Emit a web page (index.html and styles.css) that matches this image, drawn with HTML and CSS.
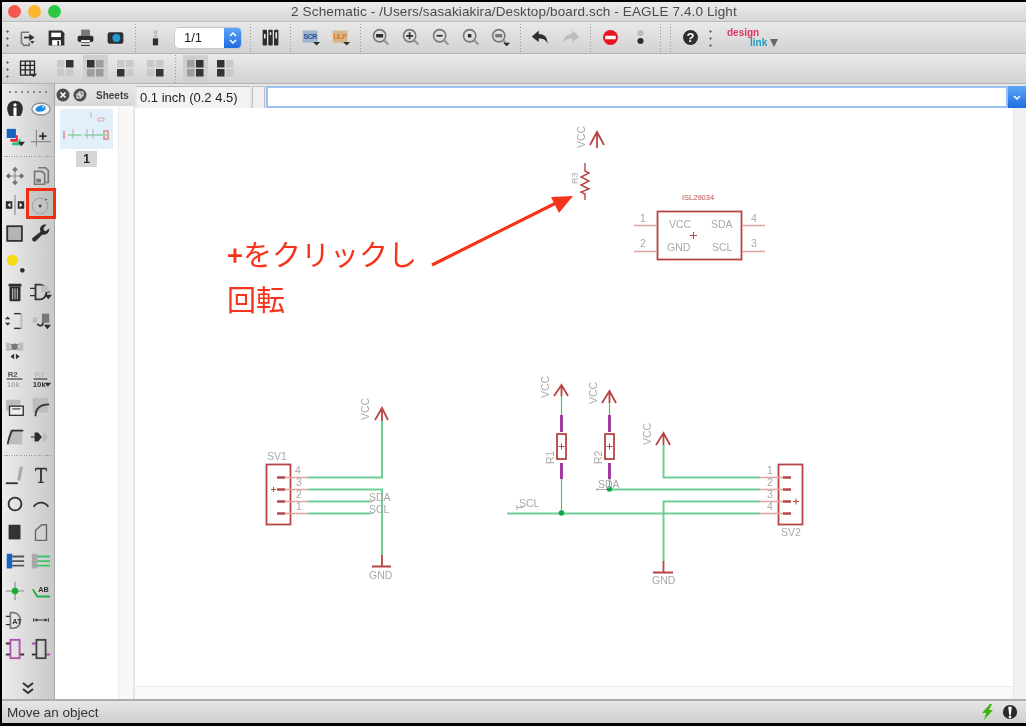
FILE: index.html
```html
<!DOCTYPE html>
<html lang="en">
<head>
<meta charset="utf-8">
<title>2 Schematic - EAGLE</title>
<link rel="stylesheet" href="styles.css">
</head>
<body>
<div class="window">
  <header class="titlebar">
    <div class="traffic"><span class="light red"></span><span class="light amber"></span><span class="light green"></span></div>
    <h1 class="title">2 Schematic - /Users/sasakiakira/Desktop/board.sch - EAGLE 7.4.0 Light</h1>
    <div></div>
  </header>

  <div class="toolbar tb1">
    <span class="grip"></span>
    <span class="btn"><svg viewBox="0 0 24 24"><path class="o2g" d="M5 6h9M5 6v12l3 3h6v-3"/><path class="o2d" d="M8 12h8"/><path class="fd" d="M14 8l6 4-6 4z"/><path class="fd" d="M15 16h5l-2.500 3z"/></svg></span>
    <span class="btn narrow"><svg viewBox="0 0 24 24"><path class="fd" d="M3 4h15l3 3v14H3z"/><rect class="fw" x="6" y="6.500" width="11" height="5"/><rect class="fw" x="7" y="15" width="10" height="6"/><rect class="fd" x="13" y="16" width="2" height="5"/></svg></span>
    <span class="btn"><svg viewBox="0 0 24 24"><rect class="fm" x="7" y="3" width="10" height="7"/><rect class="fd" x="3" y="10" width="18" height="7" rx="2"/><rect class="fw" x="7" y="15" width="10" height="6"/><path class="o1d" d="M7 21h10M7 18h10"/></svg></span>
    <span class="btn"><svg viewBox="0 0 24 24"><rect class="fd" x="3" y="6" width="18" height="13" rx="2.500"/><circle cx="13" cy="12.500" r="4.500" fill="#1d9bd8"/></svg></span>
    <span class="sep"></span>
    <span class="btn"><svg viewBox="0 0 24 24"><rect class="fd" x="9" y="13" width="6" height="8"/><rect class="fl" x="10" y="9" width="4" height="3"/><rect class="fl" x="10" y="4" width="4" height="4"/></svg></span>
    <label class="combo"><span class="combo-val">1/1</span><span class="combo-btn"><svg viewBox="0 0 14 20"><path class="chev" d="M4 8l3-3 3 3M4 12l3 3 3-3"/></svg></span></label>
    <span class="sep"></span>
    <span class="btn"><svg viewBox="0 0 24 24"><rect class="fd" x="3" y="3" width="5" height="18" rx="1"/><rect class="fd" x="9.500" y="3" width="5" height="18" rx="1"/><rect class="fd" x="16" y="3" width="5" height="18" rx="1"/><path class="ow" d="M5.500 8v5M12 6v3M18.500 6v7"/></svg></span>
    <span class="sep"></span>
    <span class="btn"><svg viewBox="0 0 24 24"><rect x="3" y="4" width="17" height="14" fill="#9fb6d0"/><text class="ico-t" x="4" y="14" fill="#2a4f9a">SCR</text><path class="fd" d="M15 17h8l-4 4z"/></svg></span>
    <span class="btn"><svg viewBox="0 0 24 24"><rect x="3" y="4" width="17" height="14" fill="#d6b68d"/><text class="ico-t" x="4" y="14" fill="#e4761c">ULP</text><path class="fd" d="M15 17h8l-4 4z"/></svg></span>
    <span class="sep"></span>
    <span class="btn"><svg viewBox="0 0 24 24"><circle class="zo" cx="11" cy="10" r="7"/><path class="zh" d="M16 15l5 5"/><rect class="fd" x="7" y="8" width="8" height="4"/></svg></span>
    <span class="btn"><svg viewBox="0 0 24 24"><circle class="zo" cx="11" cy="10" r="7"/><path class="zh" d="M16 15l5 5"/><path class="o2d" d="M7 10h8M11 6v8"/></svg></span>
    <span class="btn"><svg viewBox="0 0 24 24"><circle class="zo" cx="11" cy="10" r="7"/><path class="zh" d="M16 15l5 5"/><path class="o2d" d="M7.500 10h7"/></svg></span>
    <span class="btn"><svg viewBox="0 0 24 24"><circle class="zo" cx="11" cy="10" r="7"/><path class="zh" d="M16 15l5 5"/><rect class="fd" x="9" y="8" width="4" height="4"/></svg></span>
    <span class="btn"><svg viewBox="0 0 24 24"><circle class="zo" cx="10" cy="10" r="7"/><path class="zh" d="M15 15l3 3"/><rect class="fm" x="6" y="8" width="8" height="4"/><path class="fd" d="M15 18h8l-4 4z"/></svg></span>
    <span class="sep"></span>
    <span class="btn"><svg viewBox="0 0 24 24"><path class="fd" d="M10 4L2 11l8 6v-4c5 0 8 1 10 6 0-7-3-11-10-11z"/></svg></span>
    <span class="btn"><svg viewBox="0 0 24 24"><path class="fl" d="M14 4l8 7-8 6v-4c-5 0-8 1-10 6 0-7 3-11 10-11z"/></svg></span>
    <span class="sep"></span>
    <span class="btn"><svg viewBox="0 0 24 24"><circle cx="12" cy="12" r="8.500" fill="#e8141f"/><rect class="fw" x="6" y="10" width="12" height="4"/></svg></span>
    <span class="btn"><svg viewBox="0 0 24 24"><circle class="fl" cx="12" cy="7" r="3.500"/><circle class="fd" cx="12" cy="16" r="3.500"/></svg></span>
    <span class="sep"></span>
    <span class="sep"></span>
    <span class="btn"><svg viewBox="0 0 24 24"><circle class="fd" cx="12" cy="12" r="8.500"/><text class="ico-q" x="12" y="17">?</text></svg></span>
    <span class="grip"></span>
    <span class="dlink"><span class="dl-a">design</span><span class="dl-b">link</span></span>
    <span class="dl-arrow"></span>
  </div>

  <div class="toolbar tb2">
    <span class="grip"></span>
    <span class="btn"><svg viewBox="0 0 24 24"><path class="o1k" d="M4 3.500h16v16H4zM4 8.500h16M4 13.500h16M9.500 3.500v16M15 3.500v16"/><path class="fd" d="M15 18h8l-4 4z"/></svg></span>
    <span class="sep small"></span>
    <span class="btn"><svg class="quad" viewBox="0 0 25 27"><rect class="ql" x="4" y="5" width="7.500" height="7.500"/><rect class="qd" x="13" y="5" width="7.500" height="7.500"/><rect class="ql" x="4" y="14" width="7.500" height="7.500"/><rect class="ql" x="13" y="14" width="7.500" height="7.500"/></svg></span>
    <span class="btn"><svg class="quad on" viewBox="0 0 25 27"><rect class="qd" x="4" y="5" width="7.500" height="7.500"/><rect class="ql2" x="13" y="5" width="7.500" height="7.500"/><rect class="ql2" x="4" y="14" width="7.500" height="7.500"/><rect class="ql2" x="13" y="14" width="7.500" height="7.500"/></svg></span>
    <span class="btn"><svg class="quad" viewBox="0 0 25 27"><rect class="ql" x="4" y="5" width="7.500" height="7.500"/><rect class="ql" x="13" y="5" width="7.500" height="7.500"/><rect class="qd" x="4" y="14" width="7.500" height="7.500"/><rect class="ql" x="13" y="14" width="7.500" height="7.500"/></svg></span>
    <span class="btn"><svg class="quad" viewBox="0 0 25 27"><rect class="ql" x="4" y="5" width="7.500" height="7.500"/><rect class="ql" x="13" y="5" width="7.500" height="7.500"/><rect class="ql" x="4" y="14" width="7.500" height="7.500"/><rect class="qd" x="13" y="14" width="7.500" height="7.500"/></svg></span>
    <span class="sep"></span>
    <span class="btn"><svg class="quad on" viewBox="0 0 25 27"><rect class="ql2" x="4" y="5" width="7.500" height="7.500"/><rect class="qd" x="13" y="5" width="7.500" height="7.500"/><rect class="ql2" x="4" y="14" width="7.500" height="7.500"/><rect class="qd" x="13" y="14" width="7.500" height="7.500"/></svg></span>
    <span class="btn"><svg class="quad" viewBox="0 0 25 27"><rect class="qd" x="4" y="5" width="7.500" height="7.500"/><rect class="ql" x="13" y="5" width="7.500" height="7.500"/><rect class="qd" x="4" y="14" width="7.500" height="7.500"/><rect class="ql" x="13" y="14" width="7.500" height="7.500"/></svg></span>
  </div>

  <main class="workspace">
    <nav class="tools">
      <div class="tools-grip"></div>
      <div class="tool-grid">
        <span class="tool"><svg viewBox="0 0 24 24"><path class="fd" d="M12 3c5 0 8.500 3.500 8.500 8.500 0 3-1 5.500-2.500 8H6c-1.500-2.500-2.500-5-2.500-8C3.500 6.500 7 3 12 3z"/><circle class="fw" cx="12" cy="7.500" r="1.800"/><rect class="fw" x="10.300" y="10.500" width="3.400" height="9"/></svg></span>
        <span class="tool"><svg viewBox="0 0 24 24"><ellipse cx="12" cy="12" rx="10" ry="6.500" fill="#f6f6f6" stroke="#8f8f8f" stroke-width="1.500"/><path d="M6 13c0-3 4-5 8-5 2 0 3 1 3 3 0 3-4 4-6 4-3 0-5-1-5-2z" fill="#1d8bdc"/><circle class="fw" cx="14.500" cy="9.500" r="1"/></svg></span>
        <span class="tool"><svg viewBox="0 0 24 24"><rect x="3" y="2" width="10" height="10" fill="#1565c0"/><path d="M13 9h2v7H7v-3h6z" fill="#e8213f"/><path d="M16 13h2v7H9v-3h7z" fill="#24c26a"/><path class="fd" d="M15 16h8l-4 5z"/></svg></span>
        <span class="tool"><svg viewBox="0 0 24 24"><path class="o1m" d="M7 3v18M1 16h22"/><path class="o2d" d="M14 6v8M10 10h8"/></svg></span>
        <span class="sep-h"></span>
        <span class="tool"><svg viewBox="0 0 24 24"><path class="o1m" d="M12 8v8M8 12h8"/><path class="fm" d="M12 2l3 3-3 3-3-3zM12 16l3 3-3 3-3-3zM2 12l3-3 3 3-3 3zM16 12l3-3 3 3-3 3z"/></svg></span>
        <span class="tool"><svg viewBox="0 0 24 24"><path class="o2g" d="M9 3h8l3 3v13h-3"/><path class="o2g" d="M5 7h8l3 3v11H5z"/><rect class="fm" x="7" y="15" width="5" height="4"/></svg></span>
        <span class="tool"><svg viewBox="0 0 24 24"><path class="o1m" d="M12 1v22"/><path class="fd" d="M2 8h7v8H2zM15 8h7v8h-7z"/><path class="fw" d="M4 12l3-2.500v5zM20 12l-3-2.500v5z"/></svg></span>
        <span class="tool"><svg viewBox="0 0 24 24"><circle cx="11" cy="13" r="8.500" fill="none" stroke="#9a9a9a" stroke-width="1"/><circle class="fd" cx="11" cy="13" r="1.600"/><path class="o1d" d="M17 5.500l1.500 1"/></svg></span>
        <span class="tool"><svg viewBox="0 0 24 24"><rect x="3.500" y="3.500" width="16" height="16" fill="#b5b5b5" stroke="#333" stroke-width="2"/></svg></span>
        <span class="tool"><svg viewBox="0 0 24 24"><path class="fd" d="M21 6l-4 3-2-1 0-3 3-3c-3-1-7 1-7 5 0 1 0 1.500.5 2.500L3 16c-2 2 1 6 3.500 3.500l7-7c4 1 8-2 7.500-6.500z"/></svg></span>
        <span class="tool"><svg viewBox="0 0 24 24"><circle cx="9" cy="9" r="6" fill="#f5dc12"/><circle class="fd" cx="20" cy="20" r="2.500"/></svg></span>
        <span class="tool"></span>
        <span class="tool"><svg viewBox="0 0 24 24"><rect class="fd" x="5" y="3" width="14" height="3"/><rect class="fd" x="6" y="6" width="12" height="16" rx="1"/><path class="ow1" d="M9.500 8v12M12 8v12M14.500 8v12"/></svg></span>
        <span class="tool"><svg viewBox="0 0 24 24"><path class="o1d" d="M0 8h6M0 16h6M17 12h5"/><path class="o2d" d="M6 4v16h5c4 0 7-4 7-8s-3-8-7-8z"/><rect class="fl" x="12" y="5" width="8" height="7"/><path class="fd" d="M16 15h8l-4 5z"/></svg></span>
        <span class="tool"><svg viewBox="0 0 24 24"><path class="fd" d="M1 10l3-3 3 3zM1 14l3 3 3-3z"/><path class="o2l" d="M11 4h8v16h-8"/><path class="o1d" d="M11 4h7M11 20h7"/></svg></span>
        <span class="tool"><svg viewBox="0 0 24 24"><rect class="fl" x="3" y="8" width="5" height="6"/><rect class="fm" x="13" y="4" width="8" height="10"/><path class="o2d" d="M8 15c2 3 6 3 6-1"/><path class="fd" d="M15 16h8l-4 5z"/></svg></span>
        <span class="tool"><svg viewBox="0 0 24 24"><rect class="fl" x="2" y="4" width="5" height="9"/><rect class="fl" x="16" y="4" width="5" height="9"/><path class="o1m" d="M7 6h2M14 6h2M7 11h2M14 11h2"/><circle class="fm" cx="11.500" cy="8.500" r="3.500"/><path class="fd" d="M11 16v6l-4-3zM13 16v6l4-3z"/></svg></span>
        <span class="tool"></span>
        <span class="tool"><svg viewBox="0 0 24 24"><text class="ico-r" x="4" y="10" fill="#555">R2</text><path class="o1d" d="M3 12h17"/><text class="ico-r" x="3" y="21" fill="#aaa">10k</text></svg></span>
        <span class="tool"><svg viewBox="0 0 24 24"><text class="ico-r" x="5" y="10" fill="#bbb">R2</text><path class="o1d" d="M4 12h15"/><text class="ico-r" x="3" y="21" fill="#333">10k</text><path class="fd" d="M16 16h7l-3.500 4.500z"/></svg></span>
        <span class="tool"><svg viewBox="0 0 24 24"><rect class="fl" x="2" y="3" width="16" height="12"/><rect x="6" y="10" width="15" height="10" fill="#eee" stroke="#333" stroke-width="1.500"/><path class="o1d" d="M9 13h9"/></svg></span>
        <span class="tool"><svg viewBox="0 0 24 24"><rect class="fl" x="3" y="1" width="17" height="16"/><path class="o2d" d="M6 21c0-9 5-13 15-13"/></svg></span>
        <span class="tool"><svg viewBox="0 0 24 24"><rect class="fl" x="6" y="4" width="14" height="16"/><path class="o2d" d="M4 20c1-5 3-12 5-15h12"/></svg></span>
        <span class="tool"><svg viewBox="0 0 24 24"><path class="o1d" d="M1 12h4"/><path class="fd" d="M5 7h4l4 5-4 5H5z"/><path class="fl" d="M14 7h2l4 5-4 5h-2z"/></svg></span>
        <span class="sep-h"></span>
        <span class="tool"><svg viewBox="0 0 24 24"><path class="o2d" d="M2 21h13"/><path d="M16 18l3-15" stroke="#aaa" stroke-width="3.500" fill="none"/></svg></span>
        <span class="tool"><svg viewBox="0 0 24 24"><path class="o2d" d="M6 5h12M12 5v15"/><path class="o1d" d="M9 20h6M6 5v3M18 5v3"/></svg></span>
        <span class="tool"><svg viewBox="0 0 24 24"><circle cx="12" cy="12" r="7" fill="none" stroke="#333" stroke-width="2"/></svg></span>
        <span class="tool"><svg viewBox="0 0 24 24"><path class="o2d" d="M4 15c4-6 12-6 16 0"/></svg></span>
        <span class="tool"><svg viewBox="0 0 24 24"><rect x="5" y="3" width="13" height="16" fill="#333"/></svg></span>
        <span class="tool"><svg viewBox="0 0 24 24"><path d="M6 20V9l7-6h5v17z" fill="none" stroke="#666" stroke-width="1.500"/></svg></span>
        <span class="tool"><svg viewBox="0 0 24 24"><rect x="3" y="3" width="6" height="16" fill="#1565c0"/><path class="o2m" d="M9 6h13M9 11h13M9 16h13"/></svg></span>
        <span class="tool"><svg viewBox="0 0 24 24"><rect x="2" y="3" width="6" height="16" fill="#a9a9a9"/><path d="M8 6h14M8 11h14M8 16h14" stroke="#3cc46a" stroke-width="2" fill="none"/></svg></span>
        <span class="tool"><svg viewBox="0 0 24 24"><path class="o1m" d="M2 12h20M12 2v20"/><circle cx="12" cy="12" r="3.500" fill="#0fb02c"/></svg></span>
        <span class="tool"><svg viewBox="0 0 24 24"><path d="M3 10l5 8h14" stroke="#22b14c" stroke-width="2" fill="none"/><text class="ico-ab" x="9" y="13">AB</text></svg></span>
        <span class="tool"><svg viewBox="0 0 24 24"><path class="o1d" d="M2 8h5M2 17h5"/><path class="o2g" d="M7 4v17h3c5 0 8-4 8-8.500S15 4 10 4z"/><text class="ico-ab" x="9" y="16">AT</text></svg></span>
        <span class="tool"><svg viewBox="0 0 24 24"><path class="o1d" d="M4 10v4M20 10v4M6 12h12"/><path class="fd" d="M5 12l3-2v4zM19 12l-3-2v4z"/></svg></span>
        <span class="tool"><svg viewBox="0 0 24 24"><path class="o2d" d="M2 6h5M17 18h5"/><path class="o2d" d="M2 18h5"/><rect x="7" y="2" width="10" height="20" fill="none" stroke="#b04fb0" stroke-width="2"/></svg></span>
        <span class="tool"><svg viewBox="0 0 24 24"><path class="o2d" d="M2 18h5"/><path d="M2 6h5M17 18h5" stroke="#b04fb0" stroke-width="2" fill="none"/><rect x="7" y="2" width="10" height="20" fill="none" stroke="#444" stroke-width="2"/></svg></span>
      </div>
      <span class="more"><svg viewBox="0 0 14 14"><path d="M2 1l5 4 5-4M2 7l5 4 5-4" fill="none" stroke="#333" stroke-width="2"/></svg></span>
      <span class="tool-mark"></span>
    </nav>

    <aside class="sheets">
      <div class="sheets-head">
        <span class="round"><svg viewBox="0 0 14 14"><circle class="fd2" cx="7" cy="7" r="6.500"/><path class="ow" d="M4.500 4.500l5 5M9.500 4.500l-5 5"/></svg></span>
        <span class="round"><svg viewBox="0 0 14 14"><circle class="fd2" cx="7" cy="7" r="6.500"/><rect x="6" y="4" width="4" height="4" fill="none" stroke="#fff"/><rect x="4" y="6" width="4" height="4" fill="none" stroke="#fff"/></svg></span>
        <span class="sheets-title">Sheets</span>
      </div>
      <div class="sheets-body">
        <div class="sheet-list">
          <div class="thumb"><svg viewBox="0 0 53 40"><g class="thumb-lines"><path d="M31 3v6M38 9h6v3h-6z"/></g><path class="thumb-r" d="M4 22v8M44 22h4v8h-4z"/><path class="thumb-g" d="M8 26h14M24 26h24"/><path class="thumb-l" d="M13 20v10M27 20v10M33 20v10"/></svg></div>
          <span class="sheet-no">1</span>
        </div>
        <div class="sheet-scroll"></div>
      </div>
    </aside>

    <section class="editor">
      <div class="cmdbar">
        <span class="coord">0.1 inch (0.2 4.5)</span>
        <span class="cmd-box"></span>
        <div class="cmd-input"></div>
        <span class="cmd-drop"><svg viewBox="0 0 12 12"><path class="chev" d="M3 5l3 3 3-3"/></svg></span>
      </div>
      <div class="canvas-row">
        <div class="canvas-col">
          <div class="canvas">
            <svg class="schematic" viewBox="135 108 878 577">
              <!-- top VCC + R3 -->
              <path class="sym" d="M597 148V132M590 145L597 132L604 145"/>
              <text class="lbl" transform="translate(585 148) rotate(-90)">VCC</text>
              <path class="sym thinner" d="M585 163V171L589 173L581 177L589 181L581 185L589 189L581 192L585 194V200"/>
              <text class="lbl small" transform="translate(578 184) rotate(-90)">R3</text>
              <!-- IC -->
              <text class="lbl red tiny" x="682" y="200">ISL29034</text>
              <rect class="sym" x="657.500" y="211.500" width="84" height="48"/>
              <path class="pin" d="M634 225.500H657M634 251.500H657M742 225.500H765M742 251.500H765"/>
              <text class="lbl" x="669" y="228">VCC</text>
              <text class="lbl" x="667" y="251">GND</text>
              <text class="lbl" x="711" y="228">SDA</text>
              <text class="lbl" x="712" y="251">SCL</text>
              <text class="lbl" x="640" y="222">1</text>
              <text class="lbl" x="640" y="247">2</text>
              <text class="lbl" x="751" y="222">4</text>
              <text class="lbl" x="751" y="247">3</text>
              <path class="sym thin" d="M690 235.500H697M693.500 232V239"/>

              <!-- SV1 -->
              <rect class="sym" x="266.500" y="464.500" width="24" height="60"/>
              <path class="pin" d="M285 477.500H308M285 489.500H308M285 501.500H308M285 513.500H308"/>
              <path class="dash" d="M277 477.500H285M277 489.500H285M277 501.500H285M277 513.500H285"/>
              <path class="sym thin" d="M271 489.500H276M273.500 487V492"/>
              <path class="wire" d="M308 477.500H382V421M308 489.500H382V555M308 501.500H370M308 513.500H370"/>
              <path class="pinmark" d="M370 501.500H373M370 513.500H373"/>
              <path class="sym" d="M382 421V408M375 420L382 408L388 420"/>
              <path class="sym" d="M382 555V566M372 566.500H391"/>
              <text class="lbl" transform="translate(369 420) rotate(-90)">VCC</text>
              <text class="lbl" x="267" y="460">SV1</text>
              <text class="lbl" x="295" y="474">4</text>
              <text class="lbl" x="296" y="486">3</text>
              <text class="lbl" x="296" y="498">2</text>
              <text class="lbl" x="296" y="510">1</text>
              <text class="lbl" x="369" y="501">SDA</text>
              <text class="lbl" x="369" y="513">SCL</text>
              <text class="lbl" x="369" y="579">GND</text>

              <!-- R1, R2 -->
              <path class="sym" d="M561.500 396V385M554 396L561.500 385L568 396"/>
              <path class="wire thin" d="M561.500 396V415M561.500 479V513"/>
              <path class="res" d="M561.500 415V432M561.500 463V479"/>
              <rect class="sym" x="557" y="434" width="9" height="25"/>
              <path class="sym thin" d="M558.500 446.500H564.500M561.500 443.500V449.500"/>
              <text class="lbl" transform="translate(554 464) rotate(-90)">R1</text>
              <text class="lbl" transform="translate(549 398) rotate(-90)">VCC</text>
              <path class="sym" d="M609.500 403V391M602 403L609.500 391L616 403"/>
              <path class="wire thin" d="M609.500 403V415M609.500 479V489"/>
              <path class="res" d="M609.500 415V432M609.500 463V479"/>
              <rect class="sym" x="605" y="434" width="9" height="25"/>
              <path class="sym thin" d="M606.500 446.500H612.500M609.500 443.500V449.500"/>
              <text class="lbl" transform="translate(602 464) rotate(-90)">R2</text>
              <text class="lbl" transform="translate(597 404) rotate(-90)">VCC</text>

              <!-- SV2 side -->
              <path class="wire" d="M507 513.500H760M609 489.500H760M663.500 445V477.500H760M760 501.500H663.500V561"/>
              <path class="pinmark" d="M597 489.500H609M597 488V491"/>
              <path class="pinmark" d="M517 507.500H523M517 505V510"/>
              <circle class="dot" cx="561.500" cy="513" r="2.800"/>
              <circle class="dot" cx="609.500" cy="489" r="2.800"/>
              <path class="sym" d="M663.500 445V433M656 445L663.500 433L670 445"/>
              <path class="sym" d="M663.500 561V572M653 572.500H673"/>
              <text class="lbl" transform="translate(651 445) rotate(-90)">VCC</text>
              <text class="lbl" x="598" y="488">SDA</text>
              <text class="lbl" x="519" y="507">SCL</text>
              <text class="lbl" x="652" y="584">GND</text>
              <rect class="sym" x="778.500" y="464.500" width="24" height="60"/>
              <path class="pin" d="M760 477.500H783M760 489.500H783M760 501.500H783M760 513.500H783"/>
              <path class="dash" d="M783 477.500H791M783 489.500H791M783 501.500H791M783 513.500H791"/>
              <path class="sym thin" d="M793 501.500H799M796 498.500V504.500"/>
              <text class="lbl" x="767" y="474">1</text>
              <text class="lbl" x="767" y="486">2</text>
              <text class="lbl" x="767" y="498">3</text>
              <text class="lbl" x="767" y="510">4</text>
              <text class="lbl" x="781" y="536">SV2</text>

              <!-- annotation -->
              <text class="note" x="227" y="266"><tspan class="note-plus">+</tspan>をクリックし</text>
              <text class="note" x="227" y="311">回転</text>
              <path class="arrow" d="M432 265L556 203"/>
              <path class="arrow-head" d="M573 196L551 197L559 213z"/>
            </svg>
          </div>
          <div class="hscroll"></div>
        </div>
        <div class="vscroll"></div>
      </div>
    </section>
  </main>

  <footer class="statusbar">
    <span class="status-text">Move an object</span>
    <span class="status-icons">
      <svg viewBox="0 0 16 18"><path d="M10 1L2 10h4l-2 7 9-10H9l3-6z" fill="#3eb512"/></svg>
      <svg viewBox="0 0 18 18"><circle cx="9" cy="9" r="8" fill="#2a2a2a"/><path d="M7 3h4l-1 9H8z" fill="#fff"/><circle cx="9" cy="14.500" r="1.500" fill="#fff"/></svg>
    </span>
  </footer>
</div>
</body>
</html>
```

FILE: styles.css
```css
* { box-sizing: border-box; }
html, body { margin: 0; height: 100%; }
body { background: #000; padding: 2px 0 3px 2px; overflow: hidden; font-family: "Inter", "Liberation Sans", sans-serif; }
.window { height: 721px; display: flex; flex-direction: column; background: #e0e0e0; filter: blur(0.45px); }

.titlebar { height: 20px; display: grid; grid-template-columns: 1fr auto 1fr; align-items: center; background: linear-gradient(#ececec, #d6d6d6); border-bottom: 1px solid #bdbdbd; }
.traffic { display: flex; gap: 7px; padding-left: 5.500px; }
.light { width: 13px; height: 13px; border-radius: 50%; }
.red { background: #f5584f; }
.amber { background: #f9b62e; }
.green { background: #2cc840; }
.title { margin: 0; font: 400 13.500px "Liberation Sans", sans-serif; color: #4a4a4a; letter-spacing: 0.13px; }

.toolbar { display: flex; align-items: center; background: linear-gradient(#e9e9e9, #d2d2d2); border-bottom: 1px solid #b4b4b4; }
.tb1 { height: 32px; }
.tb2 { height: 30px; }
.grip { width: 10px; height: 20px; background: radial-gradient(circle, #777 0 1px, transparent 1.3px) center top / 3px 7px repeat-y; flex: none; }
.sep { width: 10px; height: 28px; flex: none; background: repeating-linear-gradient(#999 0 1px, transparent 1px 3px) center / 1px 100% no-repeat; }
.sep.small { width: 6px; background: none; margin-right: 2px; }
.btn { width: 30px; height: 30px; display: flex; align-items: center; justify-content: center; flex: none; }
.btn.narrow { width: 28px; }
.btn svg { width: 21px; height: 21px; }
.btn svg.quad { width: 25px; height: 27px; }
.quad.on { background: #cfcfcf; }
.ql { fill: #c9c9c9; }
.ql2 { fill: #9d9d9d; }
.qd { fill: #333; }

.combo { width: 66px; height: 20px; margin: 0 4px 0 5px; display: flex; border-radius: 4px; background: #fff; box-shadow: 0 0 0 1px #c8c8c8; overflow: hidden; flex: none; }
.combo-val { flex: 1; font: 400 13px/20px "Liberation Sans", sans-serif; color: #222; padding-left: 9px; }
.combo-btn { width: 17px; background: linear-gradient(#5da4f7, #1f6de0); display: flex; align-items: center; justify-content: center; }
.combo-btn svg { width: 14px; height: 20px; }
.chev { fill: none; stroke: #fff; stroke-width: 1.5; }

.dlink { display: flex; flex-direction: column; margin-left: 12px; width: 46px; font: 700 10px/10px "Liberation Sans", sans-serif; flex: none; }
.dl-a { color: #df3560; }
.dl-b { color: #1b9dc9; padding-left: 23px; }
.dl-arrow { width: 0; height: 0; border: 4px solid transparent; border-top: 8px solid #666; border-bottom: 0; margin-top: 11px; margin-left: -3px; }

.workspace { flex: 1; display: flex; min-height: 0; }
.tools { width: 53px; position: relative; display: flex; flex-direction: column; background: linear-gradient(90deg, #ececec, #c9c9c9); border-right: 1px solid #a8a8a8; flex: none; }
.tools-grip { height: 10px; margin: 0 5px; background: radial-gradient(circle, #888 0 .8px, transparent 1.1px) 0 6px / 6px 4px repeat-x; }
.tool-grid { display: grid; grid-template-columns: 25px 27px; grid-template-rows: repeat(2, 29px) 9px repeat(10, 29px) 9px repeat(7, 29px); }
.tool { display: flex; align-items: center; justify-content: center; }
.tool svg { width: 22px; height: 22px; }
.sep-h { grid-column: 1 / 3; height: 9px; margin: 0 2px; background: repeating-linear-gradient(90deg, #999 0 1px, transparent 1px 2.500px) center / 100% 1px no-repeat; }
.more { margin-top: auto; margin-bottom: 3px; display: flex; justify-content: center; }
.more svg { width: 14px; height: 14px; }
.tool-mark { position: absolute; left: 24px; top: 104px; width: 30px; height: 31px; border: 3px solid #f52d10; background: rgba(150, 150, 150, .22); }

.o2g, .o2d, .o1d, .o1m, .o1k, .ow, .ow1, .o2l, .o2m, .zo, .zh { fill: none; }
.o2g { stroke: #777; stroke-width: 1.8; }
.o2d { stroke: #333; stroke-width: 2; }
.o2m { stroke: #555; stroke-width: 2; }
.o2l { stroke: #bbb; stroke-width: 2; }
.o1d { stroke: #333; stroke-width: 1.2; }
.o1m { stroke: #888; stroke-width: 1.2; }
.o1k { stroke: #222; stroke-width: 1.5; }
.ow { stroke: #fff; stroke-width: 1.6; }
.ow1 { stroke: #ddd; stroke-width: 1; }
.zo { stroke: #777; stroke-width: 1.8; }
.zh { stroke: #999; stroke-width: 2.5; }
.fd { fill: #2e2e2e; }
.fd2 { fill: #4d4d4d; }
.fm { fill: #777; }
.fl { fill: #bdbdbd; }
.fw { fill: #fff; }
.ico-t { font: 700 8px "Liberation Sans", sans-serif; letter-spacing: -.5px; }
.ico-q { font: 700 15px "Liberation Sans", sans-serif; fill: #fff; text-anchor: middle; }
.ico-r { font: 700 8.500px "Liberation Sans", sans-serif; }
.ico-ab { font: 700 8px "Liberation Sans", sans-serif; fill: #333; }

.sheets { width: 80px; display: flex; flex-direction: column; flex: none; background: #e6e6e6; }
.sheets-head { height: 22px; display: flex; align-items: center; padding-left: 1px; gap: 3px; background: linear-gradient(#e8e8e8, #d8d8d8); }
.round { display: flex; }
.round svg { width: 14px; height: 14px; }
.sheets-title { font: 700 10px "Liberation Sans", sans-serif; color: #444; margin-left: 6px; }
.sheets-body { flex: 1; display: flex; min-height: 0; margin-right: 2px; }
.sheet-list { width: 63px; background: #fff; display: flex; flex-direction: column; align-items: center; padding-top: 3px; }
.thumb { width: 53px; height: 40px; background: #e2f0fb; }
.thumb svg { display: block; width: 53px; height: 40px; }
.thumb-lines { fill: none; stroke: #d8a8a8; }
.thumb-r { fill: none; stroke: #e0a0a0; stroke-width: 2; }
.thumb-g { fill: none; stroke: #a0d8b8; stroke-width: 2; }
.thumb-l { fill: none; stroke: #b0b0b0; }
.sheet-no { margin-top: 2px; width: 21px; height: 16px; background: #d6d6d6; text-align: center; font: 700 12px/16px "Liberation Sans", sans-serif; color: #222; }
.sheet-scroll { flex: 1; background: #f8f8f8; border-left: 1px solid #ececec; }

.editor { flex: 1; display: flex; flex-direction: column; min-width: 0; }
.cmdbar { height: 24px; display: flex; align-items: stretch; background: #e6e6e6; padding-top: 2px; }
.coord { width: 113px; margin-left: 2px; background: #f2f2f2; border-top: 1px solid #bbb; font: 400 13px/21px "Liberation Sans", sans-serif; color: #222; padding-left: 3px; }
.cmd-box { width: 13px; margin: 0 1px 0 2px; background: #f0f0f0; border: 1px solid #c0c0c0; border-bottom: 0; }
.cmd-input { flex: 1; background: #fff; border: 2px solid #9dc0f2; }
.cmd-drop { width: 18px; background: linear-gradient(#5da4f7, #1f6de0); display: flex; align-items: center; justify-content: center; }
.cmd-drop svg { width: 12px; height: 12px; }

.canvas-row { flex: 1; display: flex; min-height: 0; }
.canvas-col { flex: 1; display: flex; flex-direction: column; min-width: 0; }
.canvas { flex: 1; background: #fff; min-height: 0; }
.schematic { display: block; width: 878px; height: 577px; }
.hscroll { height: 13px; background: #f9f9f9; border-top: 1px solid #ececec; }
.vscroll { width: 13px; background: #f1f1f1; border-left: 1px solid #e6e6e6; }

.sym { fill: none; stroke: #b84444; stroke-width: 1.800; }
.sym.thin { stroke-width: 1; }
.sym.thinner { stroke-width: 1.400; }
.pin { fill: none; stroke: #dfa5a5; stroke-width: 1.500; }
.dash { fill: none; stroke: #b54a4a; stroke-width: 2.500; }
.wire { fill: none; stroke: #6fcf94; stroke-width: 2; }
.wire.thin { stroke: #4fbf7a; stroke-width: 1.200; }
.pinmark { fill: none; stroke: #aaa; stroke-width: 1; }
.res { fill: none; stroke: #a03ca0; stroke-width: 3; }
.dot { fill: #0ea54a; }
.lbl { font: 400 10.500px "Liberation Sans", sans-serif; fill: #a9a9a9; }
.lbl.small { font-size: 9px; }
.lbl.red { fill: #b54a4a; }
.lbl.tiny { font-size: 7.500px; }
.note { font: 400 29px "Noto Sans CJK JP", "Noto Sans", sans-serif; fill: #f6341c; }
.note-plus { font-weight: 700; font-size: 27px; }
.arrow { fill: none; stroke: #f6341c; stroke-width: 3.200; }
.arrow-head { fill: #f6341c; }

.statusbar { height: 24px; display: flex; align-items: center; justify-content: space-between; background: linear-gradient(#e6e6e6, #cfcfcf); border-top: 2px solid #adadad; padding: 0 8px 0 5px; }
.status-text { font: 400 13.500px "Liberation Sans", sans-serif; color: #333; }
.status-icons { display: flex; gap: 6px; align-items: center; }
.status-icons svg { width: 16px; height: 18px; }
```
